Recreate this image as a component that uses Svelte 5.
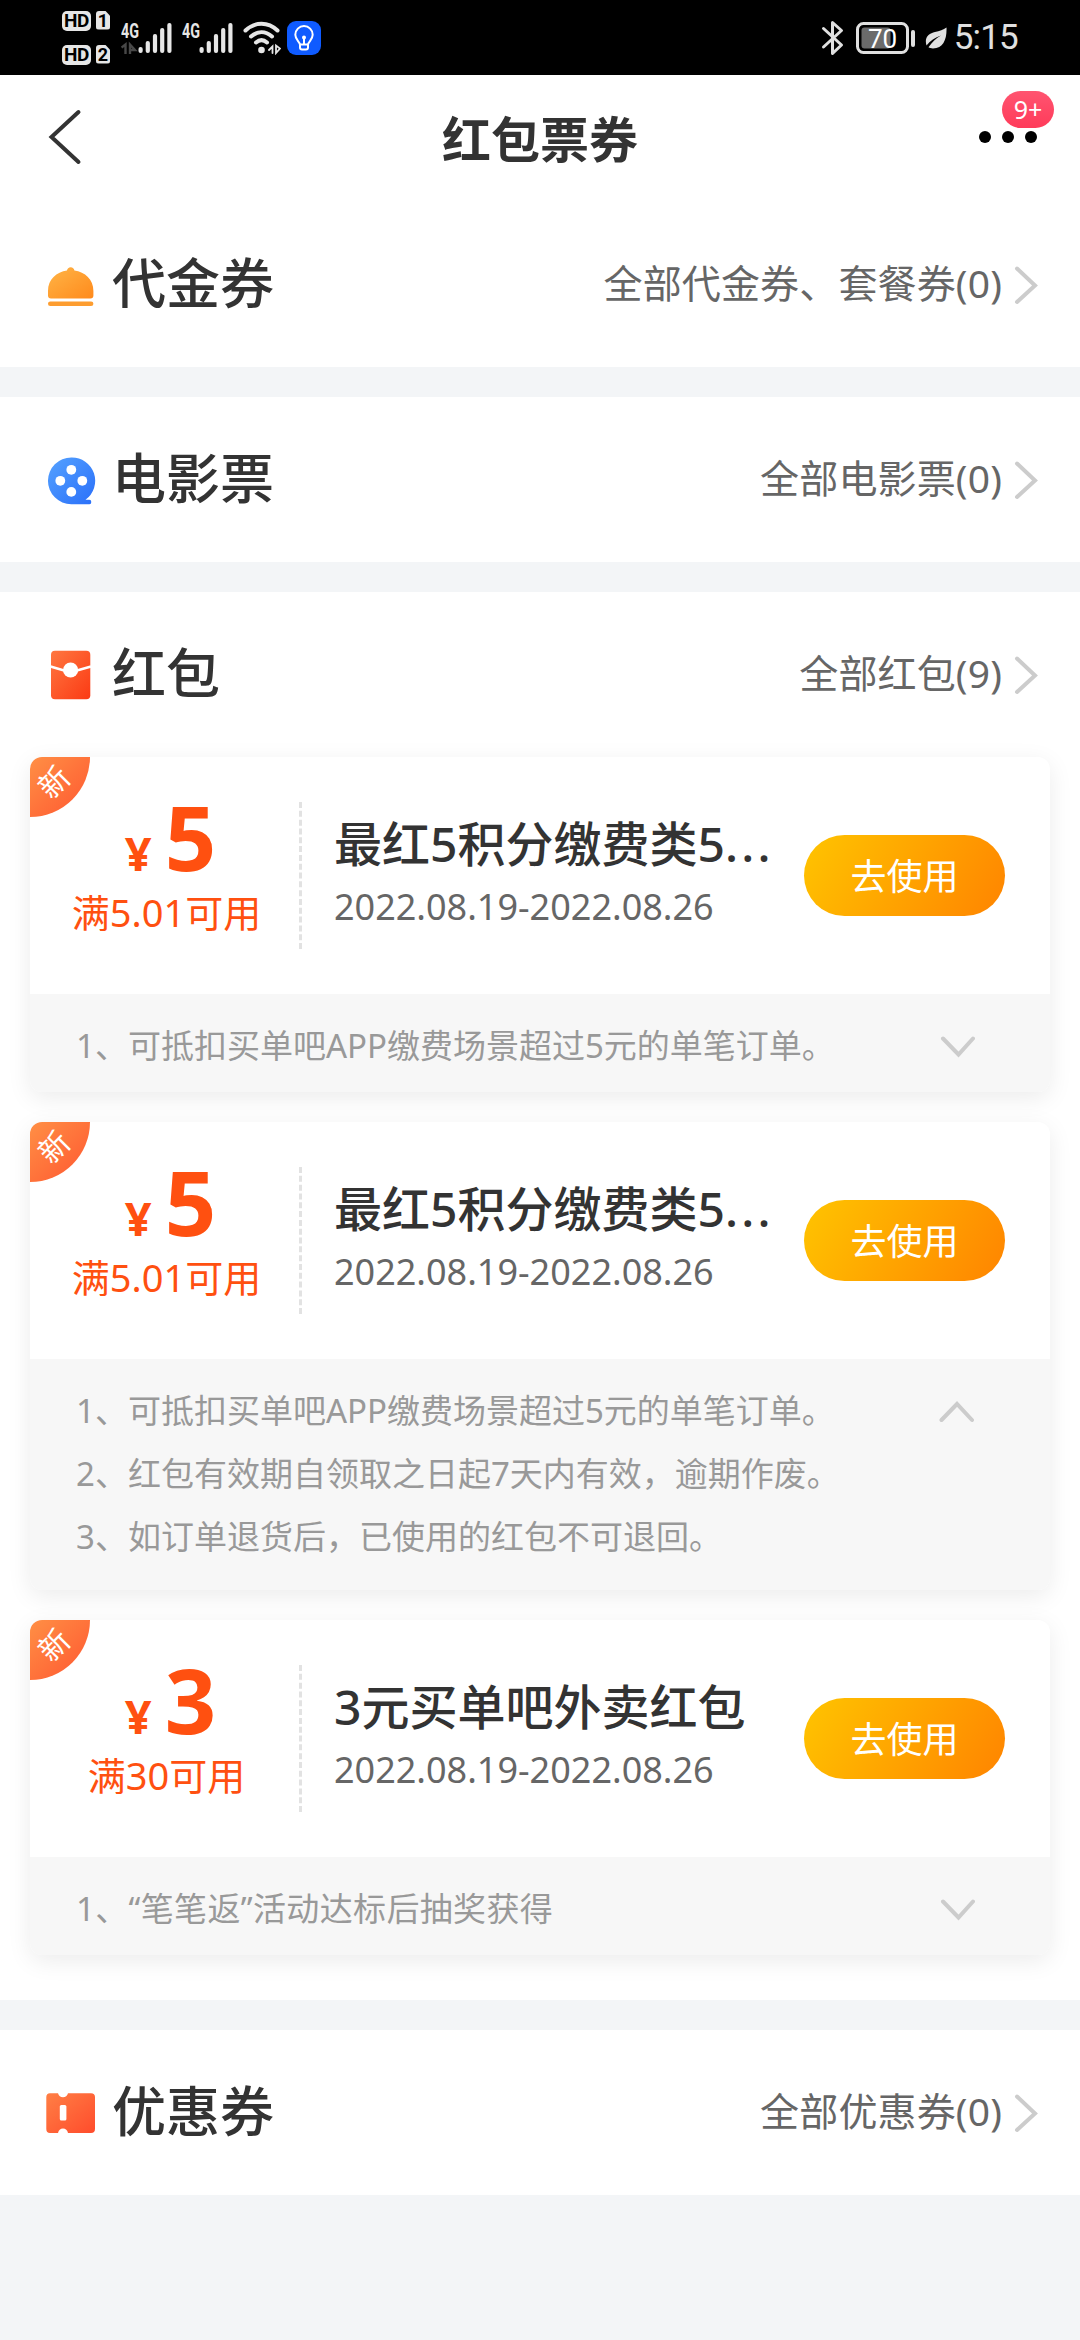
<script>
    const RULE_PAY = '1、可抵扣买单吧APP缴费场景超过5元的单笔订单。';

    const sections = [
        { icon: 'bell', title: '代金券', more: '全部代金券、套餐券(0)' },
        { icon: 'film', title: '电影票', more: '全部电影票(0)' },
        { icon: 'packet', title: '红包', more: '全部红包(9)', list: true },
        { icon: 'ticket', title: '优惠券', more: '全部优惠券(0)' }
    ];

    let coupons = $state([
        {
            amount: 5,
            limit: '满5.01可用',
            name: '最红5积分缴费类5',
            cut: true,
            date: '2022.08.19-2022.08.26',
            rules: [RULE_PAY],
            open: false
        },
        {
            amount: 5,
            limit: '满5.01可用',
            name: '最红5积分缴费类5',
            cut: true,
            date: '2022.08.19-2022.08.26',
            rules: [
                RULE_PAY,
                '2、红包有效期自领取之日起7天内有效，逾期作废。',
                '3、如订单退货后，已使用的红包不可退回。'
            ],
            open: true
        },
        {
            amount: 3,
            limit: '满30可用',
            name: '3元买单吧外卖红包',
            cut: false,
            date: '2022.08.19-2022.08.26',
            rules: ['1、“笔笔返”活动达标后抽奖获得'],
            spacing: '0.35px',
            open: false
        }
    ]);

    // altura de cada barra de señal
    const bars = [6, 12, 19, 25, 30];
</script>

{#snippet signal(arrows)}
    <svg class="signal" width="52" height="34" viewBox="0 0 52 34">
        <text x="0" y="17" class="net" textLength="18" lengthAdjust="spacingAndGlyphs">4G</text>
        {#if arrows}
            <path d="M0.500 26.500l4-3V33M9 33v-9.500l5 5.500h-4" fill="none" stroke="#484848" stroke-width="2.400" />
        {/if}
        {#each bars as h, i}
            <rect x={17.5 + i * 7.2} y={32 - h} width="4.2" height={h} rx="2" fill="#e6e6e6" />
        {/each}
    </svg>
{/snippet}

{#snippet icon(name)}
    <svg class="icon" width="50" height="50" viewBox="0 0 50 50">
        {#if name === 'bell'}
            <defs>
                <linearGradient id="g-bell" x1="0" y1="0" x2="1" y2="1">
                    <stop offset="0" stop-color="#ffb547" />
                    <stop offset="1" stop-color="#ff8a1c" />
                </linearGradient>
            </defs>
            <path d="M2 35.500V31C2 19.500 10.500 12 21 10.600C21.200 8.600 22.800 7.300 24.700 7.300C26.600 7.300 28.200 8.600 28.400 10.600C39 12 47.400 19.500 47.400 31V35.500Q47.400 38.500 44.400 38.500H5Q2 38.500 2 35.500Z" fill="url(#g-bell)" />
            <rect x="2" y="41.500" width="45.400" height="4.600" rx="2.300" fill="#fd9d30" />
        {:else if name === 'film'}
            <defs>
                <linearGradient id="g-film" x1="0" y1="0" x2="1" y2="1">
                    <stop offset="0" stop-color="#55a2ff" />
                    <stop offset="1" stop-color="#2a6ff9" />
                </linearGradient>
            </defs>
            <path d="M25.300 2.500A23.300 23.300 0 0 1 39.500 44.700H43.300Q45.300 44.700 45.300 47T43.300 49.200H25.300A23.300 23.300 0 0 1 25.300 2.500Z" fill="url(#g-film)" />
            <circle cx="25.300" cy="14.800" r="4.900" fill="#fff" />
            <circle cx="14.300" cy="25.800" r="4.900" fill="#fff" />
            <circle cx="36.300" cy="25.800" r="4.900" fill="#fff" />
            <circle cx="25.300" cy="36.900" r="4.900" fill="#fff" />
        {:else if name === 'packet'}
            <defs>
                <linearGradient id="g-packet" x1="0" y1="0" x2="1" y2="1">
                    <stop offset="0" stop-color="#ff7740" />
                    <stop offset="1" stop-color="#fb3a14" />
                </linearGradient>
            </defs>
            <rect x="5" y="0.800" width="39.300" height="48.400" rx="4" fill="url(#g-packet)" />
            <path d="M4.500 16.500L18 20.500H31L45 16.500" fill="none" stroke="#fff" stroke-width="2.600" />
            <circle cx="24.600" cy="20" r="7.600" fill="#fff" />
        {:else}
            <defs>
                <linearGradient id="g-ticket" x1="0" y1="0" x2="1" y2="1">
                    <stop offset="0" stop-color="#ff7f45" />
                    <stop offset="1" stop-color="#ff4c2c" />
                </linearGradient>
            </defs>
            <path d="M4 5.200H12Q13.200 9.300 17 9.300T22 5.200H45Q49 5.200 49 9V41Q49 45 45 45H22Q21 40.500 17 40.500T12 45H4Q0.300 45 0.300 41V9Q0.300 5.200 4 5.200Z" fill="url(#g-ticket)" />
            <rect x="13.800" y="17" width="6.600" height="15.500" rx="1.500" fill="#fff" />
        {/if}
    </svg>
{/snippet}

<div class="page">
    <div class="status">
        <div class="status-left">
            <div class="sims">
                {#each [1, 2] as n}
                    <div class="sim">
                        <span class="hd">HD</span>
                        <span class="slot">{n}</span>
                    </div>
                {/each}
            </div>
            {@render signal(true)}
            {@render signal(false)}
            <svg class="wifi" width="38" height="34" viewBox="0 0 38 34" fill="none" stroke="#e6e6e6" stroke-width="4" stroke-linecap="round">
                <path d="M2.500 9.500C12 0.500 25 0.500 34.500 9.500" />
                <path d="M8 15.500C14.500 9.800 22.500 9.800 29 15.500" />
                <path d="M13 21.500C16.500 18.500 20.500 18.500 24 21.500" />
                <circle cx="18.500" cy="29" r="3.300" fill="#e6e6e6" stroke="none" />
                <path d="M26 29l3.500-3.500V32M33 24.500V32l4-4.500z" stroke-width="1.800" />
            </svg>
            <svg class="bulb" width="34" height="34" viewBox="0 0 34 34" fill="none" stroke="#fff" stroke-width="2">
                <rect width="34" height="34" rx="9" fill="#0f5bff" stroke="none" />
                <path d="M13 23.500C12.500 20.500 8.300 18.500 8.300 13.800A8.700 8.700 0 0 1 25.700 13.800C25.700 18.500 21.500 20.500 21 23.500Z" stroke-linejoin="round" />
                <path d="M17 17.500V23M13 24V26.500Q13 28.500 15 28.500H19Q21 28.500 21 26.500V24" />
                <circle cx="17" cy="16.500" r="2" fill="#fff" stroke="none" />
            </svg>
        </div>
        <div class="status-right">
            <svg width="24" height="36" viewBox="0 0 24 36" fill="none" stroke="#e0e0e0" stroke-width="3" stroke-linejoin="round" stroke-linecap="round">
                <path d="M2.500 8.500L20.500 25L11.500 33.500V2.500L20.500 10.500L2.500 27" />
            </svg>
            <svg class="battery" width="60" height="34" viewBox="0 0 60 34">
                <rect x="1.500" y="2.500" width="50" height="29" rx="6" fill="none" stroke="#e0e0e0" stroke-width="3" />
                <rect x="5.500" y="6.500" width="29" height="21" rx="3" fill="#6b6b6b" />
                <rect x="55" y="9" width="4" height="17" rx="2" fill="#e0e0e0" />
                <text x="26.500" y="26.500" class="level" text-anchor="middle">70</text>
            </svg>
            <svg class="leaf" width="22" height="22" viewBox="0 0 22 22">
                <path d="M21.500 0.500C22 12 18.500 21.500 8 21.500C6 21.500 4.500 21 3.500 20.300C7 15 11 11.500 16 8.500C10 10.500 5 14 1.500 18.500C-1 10 4 6.500 10 5C14.500 4 18.500 3 21.500 0.500Z" fill="#e0e0e0" />
            </svg>
            <span class="time">5:15</span>
        </div>
    </div>

    <div class="nav">
        <svg class="back" width="36" height="58" viewBox="0 0 36 58" fill="none" stroke="#333" stroke-width="4" stroke-linecap="round">
            <path d="M32.500 4L5.500 29L32.500 54" />
        </svg>
        <h1>红包票券</h1>
        <div class="menu">
            <i></i><i></i><i></i>
            <span class="badge">9+</span>
        </div>
    </div>

    {#each sections as s}
        <section>
            <div class="row">
                {@render icon(s.icon)}
                <h2>{s.title}</h2>
                <span class="more">{s.more}</span>
                <svg width="24" height="40" viewBox="0 0 24 40" fill="none" stroke="#ccc" stroke-width="4" stroke-linecap="round">
                    <path d="M3 3.500L21 20.500L3 37" />
                </svg>
            </div>
            {#if s.list}
                <div class="list">
                    {#each coupons as c}
                        <div class="card">
                            <span class="ribbon"><b>新</b></span>
                            <div class="head">
                                <div class="price">
                                    <div class="amount"><span>¥</span>{c.amount}</div>
                                    <div class="limit">{c.limit}</div>
                                </div>
                                <div class="info">
                                    <div class="name">{c.name}{#if c.cut}<span class="dots">...</span>{/if}</div>
                                    <div class="date">{c.date}</div>
                                </div>
                                <button class="use">去使用</button>
                            </div>
                            <div class="foot" class:open={c.open}>
                                <div class="rules" style:letter-spacing={c.spacing}>
                                    {#each c.rules as rule}
                                        <p>{rule}</p>
                                    {/each}
                                </div>
                                <svg class="arrow" onclick={() => (c.open = !c.open)} role="presentation" width="36" height="22" viewBox="0 0 36 22" fill="none" stroke="#ccc" stroke-width="4" stroke-linecap="round">
                                    <path d={c.open ? 'M2.5 19L18 3L33 19' : 'M4 2.500L19.500 18.500L34 2.500'} />
                                </svg>
                            </div>
                        </div>
                    {/each}
                </div>
            {/if}
        </section>
    {/each}
</div>

<style>
:global(body) {
    background: #f3f5f7;
}

.page {
    width: 1080px;
    min-height: 2340px;
    background: #f3f5f7;
    color: #333;
    font-family: "Noto Sans", "Noto Sans CJK SC", sans-serif;
}

h1, h2, p {
    margin: 0;
}

svg {
    display: block;
    flex: none;
}

/* barra de estado */
.status {
    height: 75px;
    box-sizing: border-box;
    padding: 0 62px 0 62px;
    background: #000;
    display: flex;
    justify-content: space-between;
    align-items: center;
}

.status-left, .status-right {
    display: flex;
    align-items: center;
}

.sims {
    display: flex;
    flex-direction: column;
    gap: 14px;
    margin-right: 11px;
}

.sim {
    display: flex;
    gap: 5px;
    font-family: Roboto, sans-serif;
    font-weight: 700;
    color: #000;
    line-height: 20px;
    text-align: center;
}

.hd {
    width: 29px;
    height: 20px;
    border-radius: 5px;
    background: #e6e6e6;
    font-size: 19px;
    letter-spacing: -0.5px;
}

.slot {
    width: 14px;
    height: 19px;
    border-radius: 3px;
    background: #e6e6e6;
    clip-path: polygon(0 0, 65% 0, 100% 28%, 100% 100%, 0 100%);
    font-size: 18px;
}

.signal {
    margin-right: 9px;
}

.net {
    font: 700 20px Roboto, sans-serif;
    fill: #e6e6e6;
}

.wifi {
    margin-right: 6px;
}

.battery {
    margin: 0 9px 0 11px;
}

.level {
    font: 400 26px Roboto, sans-serif;
    fill: #fff;
}

.leaf {
    margin-right: 7px;
}

.time {
    font: 400 35px/40px Roboto, sans-serif;
    letter-spacing: -0.8px;
    color: #e0e0e0;
}

/* cabecera */
.nav {
    height: 127px;
    box-sizing: border-box;
    padding: 0 43px 3px 46px;
    background: #fff;
    display: flex;
    align-items: center;
    justify-content: space-between;
}

h1 {
    margin: 3px 0 0 19px;
    font-size: 49px;
    font-weight: 700;
    line-height: 60px;
}

.menu {
    position: relative;
    display: flex;
    gap: 11px;
}

.menu i {
    width: 12px;
    height: 12px;
    border-radius: 50%;
    background: #000;
}

.badge {
    position: absolute;
    left: 23px;
    bottom: 15px;
    width: 52px;
    height: 37px;
    border-radius: 19px;
    background: linear-gradient(#ff5470, #ff3b5a);
    color: #fff;
    font-size: 25px;
    line-height: 37px;
    text-align: center;
}

section {
    background: #fff;
    margin-bottom: 30px;
}

.row {
    height: 165px;
    box-sizing: border-box;
    padding: 0 42px 0 46px;
    display: flex;
    align-items: center;
}

h2 {
    flex: 1;
    margin: 0 0 4px 16px;
    font-size: 54px;
    font-weight: 500;
    line-height: 70px;
}

.more {
    margin: 0 12px 4px 0;
    font-size: 39px;
    letter-spacing: 0.15px;
    line-height: 50px;
    color: #666;
}

.list {
    padding: 0 30px 45px;
    display: flex;
    flex-direction: column;
    gap: 30px;
}

.card {
    position: relative;
    border-radius: 12px;
    background: #fff;
    box-shadow: 0 6px 24px rgba(0, 0, 0, 0.08);
}

.ribbon {
    position: absolute;
    top: 0;
    left: 0;
    width: 60px;
    height: 60px;
    border-radius: 12px 0 60px 0;
    background: linear-gradient(135deg, #ff8f45, #ff5630);
}

.ribbon b {
    display: block;
    width: 48px;
    height: 50px;
    color: #fff;
    font-size: 30px;
    font-weight: 400;
    line-height: 50px;
    text-align: center;
    transform: rotate(-45deg);
}

.head {
    height: 237px;
    box-sizing: border-box;
    padding-right: 45px;
    display: flex;
    align-items: center;
}

.price {
    width: 272px;
    height: 147px;
    box-sizing: border-box;
    padding-left: 4px;
    border-right: 3px dashed #e2e2e2;
    color: #ff5010;
    text-align: center;
}

.amount {
    height: 84px;
    padding-left: 8px;
    font-size: 90px;
    font-weight: 700;
    line-height: 69px;
}

.amount span {
    margin-right: 13px;
    font-size: 47px;
}

.limit {
    font-size: 38px;
    line-height: 52px;
}

.info {
    flex: 1;
    height: 118px;
    padding-left: 32px;
    white-space: nowrap;
}

.name {
    height: 60px;
    font-size: 48px;
    font-weight: 500;
    line-height: 53px;
}

.dots {
    letter-spacing: 3.2px;
}

.date {
    font-size: 36px;
    line-height: 60px;
    color: #666;
}

.use {
    width: 201px;
    height: 81px;
    padding: 0 0 2px;
    border: 0;
    border-radius: 41px;
    background: linear-gradient(120deg, #ffc400, #ff8400);
    color: #fff;
    font: inherit;
    font-size: 36px;
}

.foot {
    padding: 20px 75px 15px 46px;
    border-radius: 0 0 12px 12px;
    background: #f7f7f7;
    display: flex;
    justify-content: space-between;
}

.foot.open {
    padding-bottom: 22px;
}

.rules p {
    font-size: 33px;
    line-height: 63px;
    color: #999;
}

.arrow {
    margin-top: 22px;
}
</style>
